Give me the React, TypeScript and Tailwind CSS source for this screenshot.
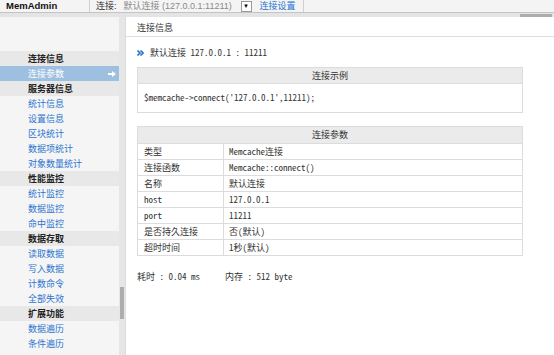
const sideMenu: { title: string; items: string[] }[] = [
  { title: "连接信息", items: ["连接参数"] },
  { title: "服务器信息", items: ["统计信息", "设置信息", "区块统计", "数据项统计", "对象数量统计"] },
  { title: "性能监控", items: ["统计监控", "数据监控", "命中监控"] },
  { title: "数据存取", items: ["读取数据", "写入数据", "计数命令", "全部失效"] },
  { title: "扩展功能", items: ["数据遍历", "条件遍历"] },
];

const params: [string, string][] = [
  ["类型", "Memcache连接"],
  ["连接函数", "Memcache::connect()"],
  ["名称", "默认连接"],
  ["host", "127.0.0.1"],
  ["port", "11211"],
  ["是否持久连接", "否(默认)"],
  ["超时时间", "1秒(默认)"],
];

function TopBar() {
  return (
    <div className="flex h-[13px] items-stretch border-b border-[#c4c4c4] bg-[#f4f4f4] text-[9px] leading-none">
      <div className="flex w-[90px] items-center border-r border-[#d0d0d0] pl-[6px] font-['Liberation_Sans','Noto_Sans_CJK_SC',sans-serif] text-[9.5px] font-bold text-[#111]">
        MemAdmin
      </div>
      <div className="flex items-center pl-[6px] font-['Liberation_Sans','Noto_Sans_CJK_SC',sans-serif] text-[#333]">
        <span>连接:</span>
        <span className="ml-[7px] w-[117px] text-[#8a8a8a]">默认连接 (127.0.0.1:11211)</span>
        <span className="flex h-[11px] w-[11px] items-center justify-center border border-[#9a9a9a] bg-white text-[6px] text-black">
          ▼
        </span>
        <a className="ml-[8px] text-[#2b74d0]">连接设置</a>
      </div>
      <div className="ml-[7px] border-r border-[#d0d0d0]" />
    </div>
  );
}

function Sidebar() {
  return (
    <div className="flex w-[126px] shrink-0 border-r border-[#dcdcdc]">
      <div className="w-[120px] bg-[#f5f5f5] pt-[34px] font-['Noto_Sans_CJK_SC',sans-serif] text-[9px]">
        {sideMenu.map((group) => (
          <div key={group.title}>
            <div className="flex h-[15px] items-center bg-[#e8e8e8] pl-[28px] font-bold text-[#222]">{group.title}</div>
            {group.items.map((item) =>
              item === "连接参数" ? (
                <div key={item} className="flex h-[15px] items-center justify-between bg-[#9dbfe0] pl-[28px] pr-[3px] text-white">
                  <span>{item}</span>
                  <svg width="8" height="6" viewBox="0 0 8 6">
                    <path d="M0 2h4V0l4 3-4 3V4H0z" fill="#fff" />
                  </svg>
                </div>
              ) : (
                <div key={item} className="flex h-[15px] items-center pl-[28px] text-[#2b74d0]">
                  {item}
                </div>
              )
            )}
          </div>
        ))}
      </div>
      <div className="flex w-[6px] justify-center bg-[#e6e6e6] pt-[270px]">
        <div className="h-[32px] w-[4px] bg-[#adadad]" />
      </div>
    </div>
  );
}

function Content() {
  return (
    <div className="flex-1 bg-white font-['Noto_Sans_Mono_CJK_SC','Noto_Sans_CJK_SC',monospace] text-[9px] text-[#333]">
      <div className="flex h-[20px] items-center border-b border-[#dedede] pl-[11px] pt-[3px] font-['Noto_Sans_CJK_SC',sans-serif]">
        连接信息
      </div>
      <div className="w-[397px] pl-[11px]">
        <div className="flex h-[30px] items-center gap-[6px] pt-[2px]">
          <svg width="7" height="6" viewBox="0 0 7 6">
            <path d="M0.5 0.5l2.5 2.5-2.5 2.5M3.5 0.5l2.5 2.5-2.5 2.5" stroke="#2b74d0" strokeWidth="1.6" fill="none" />
          </svg>
          <span>
            <span className="font-['Noto_Sans_CJK_SC',sans-serif]">默认连接</span> 127.0.0.1 : 11211
          </span>
        </div>
        <div className="border border-[#dcdcdc]">
          <div className="flex h-[16px] items-center justify-center border-b border-[#dcdcdc] bg-[#ebebeb]">连接示例</div>
          <div className="flex h-[28px] items-center pl-[6px]">$memcache-&gt;connect('127.0.0.1',11211);</div>
        </div>
        <div className="mt-[13px] border border-[#dcdcdc]">
          <div className="flex h-[16px] items-center justify-center bg-[#ebebeb]">连接参数</div>
          {params.map(([k, v]) => (
            <div key={k} className="flex h-[16px] border-t border-[#dcdcdc]">
              <div className="flex w-[86px] items-center border-r border-[#dcdcdc] pl-[6px]">{k}</div>
              <div className="flex items-center pl-[5px]">{v}</div>
            </div>
          ))}
        </div>
        <div className="mt-[14px] flex gap-[25px]">
          <span>耗时 : 0.04 ms</span>
          <span>内存 : 512 byte</span>
        </div>
      </div>
    </div>
  );
}

export default function App() {
  return (
    <div className="flex h-[355px] w-[554px] flex-col overflow-hidden bg-white">
      <TopBar />
      <div className="flex h-[4px] justify-end bg-[#e4e4e4] pr-[2px]">
        <div className="h-[3px] w-[32px] self-center bg-[#adadad]" />
      </div>
      <div className="flex flex-1">
        <Sidebar />
        <Content />
      </div>
    </div>
  );
}
